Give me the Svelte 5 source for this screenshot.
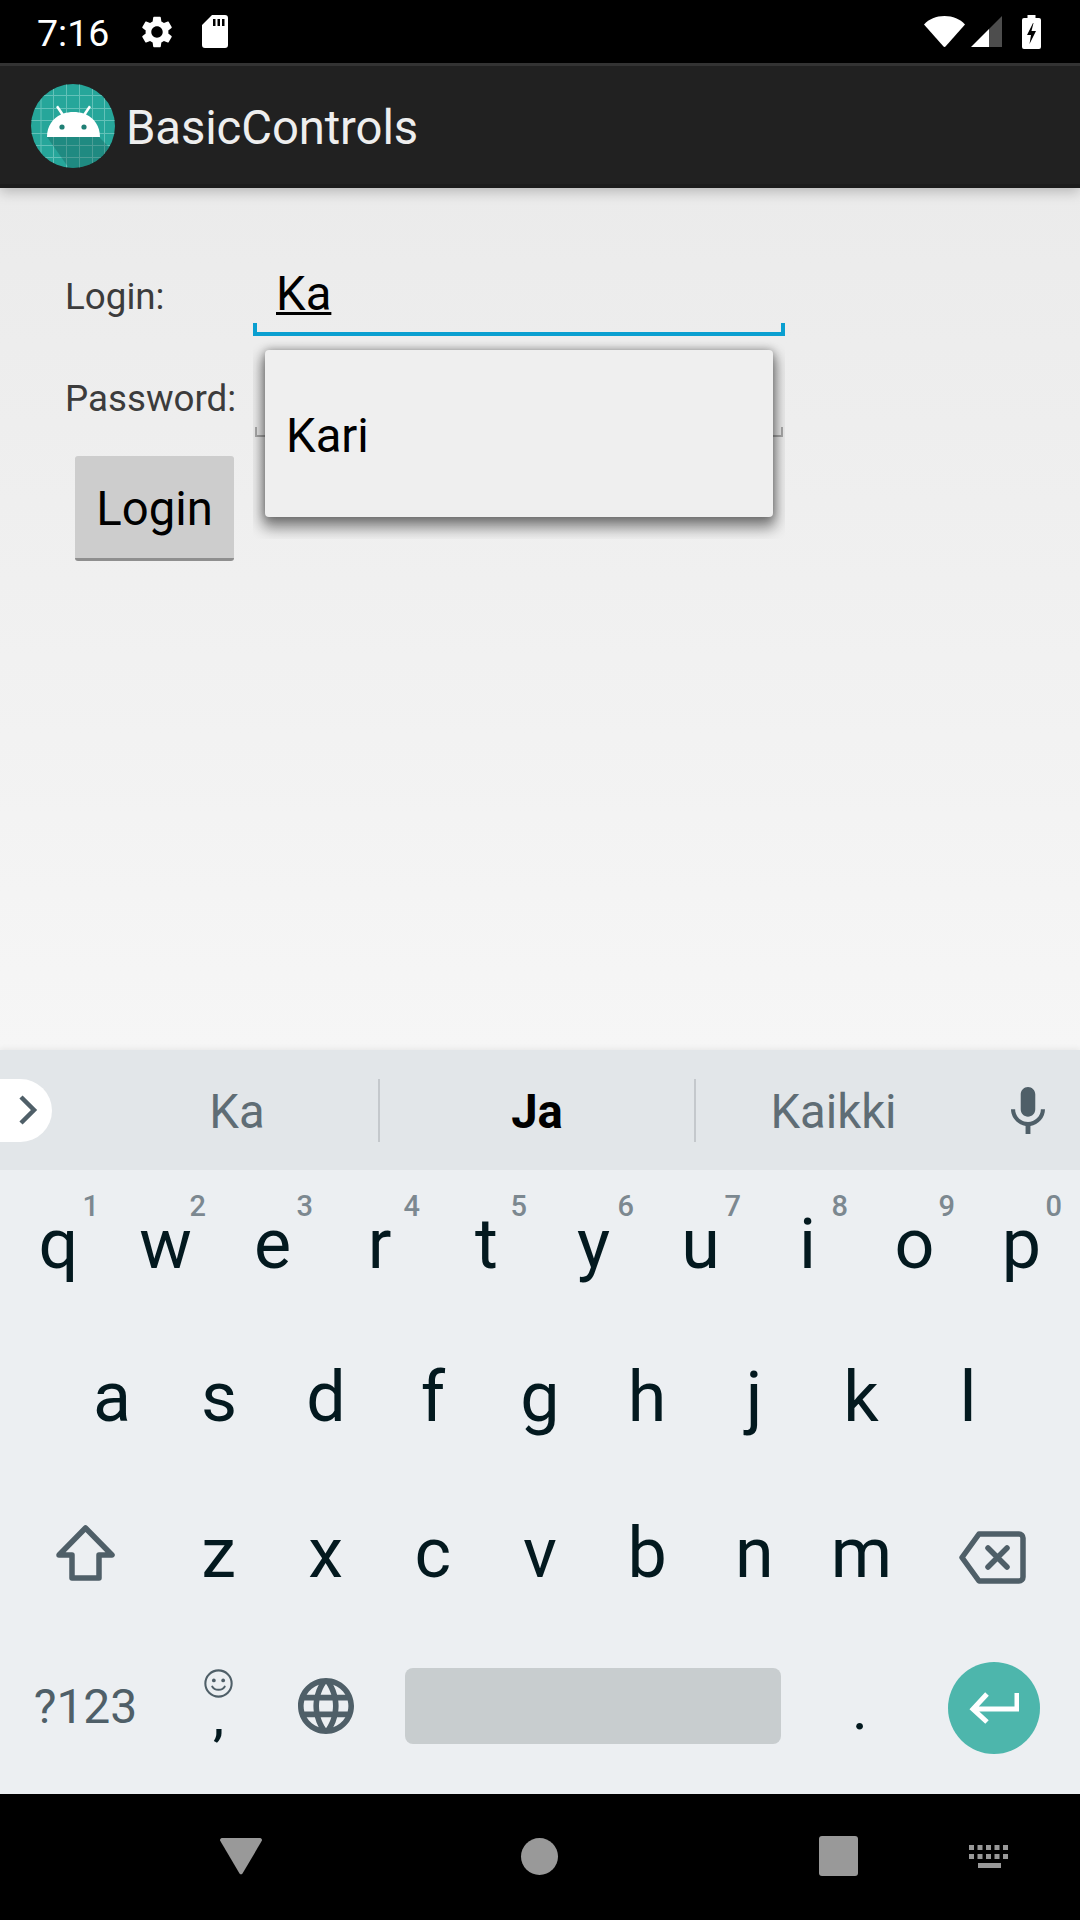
<script>
  const rowOne = [['q','1'],['w','2'],['e','3'],['r','4'],['t','5'],['y','6'],['u','7'],['i','8'],['o','9'],['p','0']];
  const rowTwo = ['a','s','d','f','g','h','j','k','l'];
  const rowThree = ['z','x','c','v','b','n','m'];
  const gridX = [9.500, 22, 35, 48, 61, 73];
  const gridY = [11, 24, 36, 49, 61, 73];
</script>

<div class="screen">
  <div class="statusbar">
    <span class="time">7:16</span>
    <svg class="gear" viewBox="0 0 24 24"><path fill="#fff" d="M19.14 12.94c.04-.3.06-.61.06-.94 0-.32-.02-.64-.07-.94l2.03-1.58c.18-.14.23-.41.12-.61l-1.92-3.32c-.12-.22-.37-.29-.59-.22l-2.39.96c-.5-.38-1.03-.7-1.62-.94l-.36-2.54c-.04-.24-.24-.41-.48-.41h-3.84c-.24 0-.43.17-.47.41l-.36 2.54c-.59.24-1.13.57-1.62.94l-2.39-.96c-.22-.08-.47 0-.59.22L2.74 8.87c-.12.21-.08.47.12.61l2.03 1.58c-.05.3-.09.63-.09.94s.02.64.07.94l-2.03 1.58c-.18.14-.23.41-.12.61l1.92 3.32c.12.22.37.29.59.22l2.39-.96c.5.38 1.03.7 1.62.94l.36 2.54c.05.24.24.41.48.41h3.84c.24 0 .44-.17.47-.41l.36-2.54c.59-.24 1.13-.56 1.62-.94l2.39.96c.22.08.47 0 .59-.22l1.92-3.32c.12-.22.07-.47-.12-.61l-2.01-1.58zM12 15.6c-1.98 0-3.6-1.62-3.6-3.6s1.62-3.6 3.6-3.6 3.6 1.62 3.6 3.6-1.62 3.6-3.6 3.6z"/></svg>
    <svg class="sd" viewBox="0 0 26 33"><path fill="#fff" fill-rule="evenodd" d="M10 0h13a3 3 0 0 1 3 3v27a3 3 0 0 1-3 3H3a3 3 0 0 1-3-3V10zM11 4v7h2.500V4zM15.500 4v7H18V4zM20 4v7h2.500V4z"/></svg>
    <span class="spacer"></span>
    <svg class="wifi" viewBox="0 0 41 31"><path fill="#fff" d="M0 8.500C5 3 12 0 20.500 0S36 3 41 8.500L21.500 30.500a1.400 1.400 0 0 1-2 0z"/></svg>
    <svg class="signal" viewBox="0 0 31 31"><path fill="#fff" fill-opacity=".3" d="M18 13L31 0v31H18z"/><path fill="#fff" d="M0 31L18 13v18z"/></svg>
    <svg class="battery" viewBox="0 0 19 34"><path fill="#fff" fill-rule="evenodd" d="M5.500 0h8v3H17a2 2 0 0 1 2 2v27a2 2 0 0 1-2 2H2a2 2 0 0 1-2-2V5a2 2 0 0 1 2-2h3.500zM11 8l-6 12h4l-1.500 9 6.500-13h-4.500l2-8z"/></svg>
  </div>

  <header class="appbar">
    <svg class="logo" viewBox="0 0 84 84">
      <defs><clipPath id="disc"><circle cx="42" cy="42" r="42"/></clipPath></defs>
      <g clip-path="url(#disc)">
        <rect width="84" height="84" fill="#26a69a"/>
        {#each gridX as x}
          <rect {x} y="0" width="1" height="84" fill="#63c1b8"/>
        {/each}
        {#each gridY as y}
          <rect x="0" {y} width="84" height="1" fill="#63c1b8"/>
        {/each}
        <path fill="#10443f" fill-opacity=".28" d="M16 53h52l24 24v20H47z"/>
        <path fill="#fff" d="M16 53c0-11 6-19 14-22.500l-5-7.500 2-1.500 5.500 8c6-2 14-2 20 0l5.500-8 2 1.500-5 7.500C63 34 69 42 69 53z"/>
        <circle cx="31" cy="43" r="2.600" fill="#1f7f75"/>
        <circle cx="53" cy="43" r="2.600" fill="#1f7f75"/>
      </g>
    </svg>
    <span class="title">BasicControls</span>
  </header>

  <main class="page">
    <div class="field-row">
      <span class="label">Login:</span>
      <div class="input active"><span class="typed">Ka</span></div>
    </div>
    <div class="field-row second">
      <span class="label">Password:</span>
      <div class="input"></div>
    </div>
    <button class="login">Login</button>

    <div class="popup"><span>Kari</span></div>
  </main>

  <section class="keyboard">
    <div class="strip">
      <div class="chip">
        <svg viewBox="0 0 20 30"><path fill="none" stroke="#4f5f68" stroke-width="4.500" d="M3 2l13 13L3 28"/></svg>
      </div>
      <span class="word first">Ka</span>
      <i class="divider"></i>
      <span class="word strong">Ja</span>
      <i class="divider"></i>
      <span class="word last">Kaikki</span>
      <svg class="mic" viewBox="5 2 14 19" preserveAspectRatio="none"><path fill="#4f5f68" d="M12 14c1.660 0 2.990-1.340 2.990-3L15 5c0-1.660-1.340-3-3-3S9 3.340 9 5v6c0 1.660 1.340 3 3 3zm5.300-3c0 3-2.540 5.100-5.300 5.100S6.700 14 6.700 11H5c0 3.410 2.720 6.230 6 6.720V21h2v-3.280c3.280-.48 6-3.300 6-6.720h-1.700z"/></svg>
    </div>

    <div class="keys">
      <div class="row top">
        {#each rowOne as [letter, hint]}
          <div class="key">{letter}<sup class="hint">{hint}</sup></div>
        {/each}
      </div>
      <div class="row indent">
        {#each rowTwo as letter}
          <div class="key">{letter}</div>
        {/each}
      </div>
      <div class="row third">
        <div class="key wide">
          <svg class="shift" viewBox="0 0 59 56"><path fill="none" stroke="#4f5f68" stroke-width="5.500" stroke-linejoin="round" d="M29.500 3L56 30H43v23H16V30H3z"/></svg>
        </div>
        {#each rowThree as letter}
          <div class="key">{letter}</div>
        {/each}
        <div class="key wide">
          <svg class="backspace" viewBox="0 0 67 53"><path fill="none" stroke="#4f5f68" stroke-width="5.500" stroke-linejoin="round" d="M20 3H60a4 4 0 0 1 4 4V46a4 4 0 0 1-4 4H20L3 26.500z"/><path fill="none" stroke="#4f5f68" stroke-width="5.500" stroke-linecap="round" d="M29 17l19 19M48 17L29 36"/></svg>
        </div>
      </div>
      <div class="row">
        <div class="key wide sym">?123</div>
        <div class="key comma">
          <svg class="smiley" viewBox="0 0 28 28"><circle cx="14" cy="14" r="12.700" fill="none" stroke="#4f5f68" stroke-width="2"/><circle cx="9.500" cy="11" r="1.800" fill="#4f5f68"/><circle cx="18.500" cy="11" r="1.800" fill="#4f5f68"/><path d="M8 17c2 4 10 4 12 0" fill="none" stroke="#4f5f68" stroke-width="2" stroke-linecap="round"/></svg>
          <span>,</span>
        </div>
        <div class="key globe-key">
          <svg class="globe" viewBox="2 2 20 20"><path fill="#4f5f68" d="M11.990 2C6.470 2 2 6.480 2 12s4.470 10 9.990 10C17.520 22 22 17.520 22 12S17.520 2 11.990 2zm6.930 6h-2.950c-.32-1.250-.78-2.450-1.380-3.560 1.840.63 3.370 1.910 4.330 3.560zM12 4.040c.83 1.200 1.480 2.530 1.910 3.960h-3.820c.43-1.430 1.080-2.760 1.910-3.960zM4.260 14C4.100 13.360 4 12.690 4 12s.1-1.360.26-2h3.380c-.08.66-.14 1.320-.14 2 0 .68.06 1.340.14 2H4.260zm.82 2h2.950c.32 1.250.78 2.450 1.380 3.560-1.840-.63-3.370-1.900-4.330-3.560zm2.950-8H5.080c.96-1.660 2.490-2.930 4.330-3.560C8.810 5.550 8.350 6.750 8.030 8zM12 19.960c-.83-1.200-1.480-2.530-1.910-3.960h3.820c-.43 1.430-1.080 2.760-1.910 3.960zM14.340 14H9.660c-.09-.66-.16-1.320-.16-2 0-.68.07-1.350.16-2h4.680c.09.65.16 1.320.16 2 0 .68-.07 1.340-.16 2zm.25 5.560c.6-1.110 1.060-2.310 1.380-3.560h2.950c-.96 1.650-2.490 2.930-4.330 3.560zM16.360 14c.08-.66.14-1.320.14-2 0-.68-.06-1.340-.14-2h3.380c.16.64.26 1.310.26 2s-.1 1.360-.26 2h-3.380z"/></svg>
        </div>
        <div class="space-key"><div class="space"></div></div>
        <div class="key period"><span>.</span></div>
        <div class="key wide">
          <div class="enter">
            <svg viewBox="0 0 50 32"><path fill="none" stroke="#fff" stroke-width="5" d="M48 1v16H5M18 2L4 17l14 13"/></svg>
          </div>
        </div>
      </div>
    </div>
  </section>

  <nav class="navbar">
    <svg class="back" viewBox="0 0 42 37"><path fill="#999" d="M2 0h38a2 2 0 0 1 1.800 2.800L22.500 35.500a2 2 0 0 1-3 0L.2 2.800A2 2 0 0 1 2 0z"/></svg>
    <div class="home"></div>
    <div class="recent"></div>
    <svg class="kbd" viewBox="0 0 41 23">
      {#each [0, 8.500, 17, 25.500, 34] as x}
        <rect {x} y="0" width="5" height="5" fill="#999"/>
        <rect {x} y="9" width="5" height="5" fill="#999"/>
      {/each}
      <rect x="9" y="18" width="23" height="5" fill="#999"/>
    </svg>
  </nav>
</div>

<style>
  :global(body) {
    margin: 0;
    background: #000;
  }

  .screen {
    width: 1080px;
    height: 1920px;
    display: flex;
    flex-direction: column;
    overflow: hidden;
    font-family: Roboto, "Liberation Sans", sans-serif;
  }

  .statusbar {
    height: 63px;
    background: #000;
    display: flex;
    align-items: center;
    padding: 0 39px 0 37px;
    color: #fff;
    flex: none;
  }

  .time {
    font-size: 37.500px;
    width: 100px;
    margin-top: 2px;
  }

  .gear { width: 38px; height: 38px; margin-left: 1px; }
  .sd { width: 26px; height: 33px; margin-left: 26px; }
  .spacer { flex: 1; }
  .wifi { width: 41px; height: 31px; }
  .signal { width: 31px; height: 31px; margin-left: 6px; }
  .battery { width: 19px; height: 34px; margin-left: 20px; }

  .appbar {
    height: 125px;
    flex: none;
    box-sizing: border-box;
    background: #212121;
    border-top: 3px solid #333;
    border-bottom: 4px solid #1c1c1c;
    display: flex;
    align-items: center;
    padding-left: 31px;
    box-shadow: 0 4px 12px rgba(0, 0, 0, .22);
    z-index: 2;
    position: relative;
  }

  .logo { width: 84px; height: 84px; margin-top: 2px; }

  .title {
    color: #eee;
    font-size: 47.250px;
    letter-spacing: -.1px;
    margin-left: 11px;
    margin-top: 6px;
  }

  .page {
    flex: 1;
    position: relative;
    background: linear-gradient(#ebebeb, #f6f6f6);
    padding: 67px 0 0 65px;
  }

  .field-row {
    display: flex;
    height: 81px;
    align-items: flex-end;
  }

  .second { height: 101px; }

  .label {
    width: 188px;
    font-size: 36.750px;
    color: #3c3c3c;
    padding-bottom: 18px;
  }

  .second .label { padding-bottom: 17px; }

  .input {
    width: 528px;
    margin-left: 2px;
    height: 10px;
    box-sizing: border-box;
    border: 2px solid #aaa;
    border-top: 0;
    position: relative;
  }

  .active {
    width: 532px;
    margin-left: 0;
    border: 4px solid #0a9fd0;
    border-top: 0;
    height: 13px;
  }

  .typed {
    position: absolute;
    left: 19px;
    bottom: 10px;
    font-size: 47.250px;
    color: #000;
    text-decoration: underline;
    text-decoration-thickness: 3px;
  }

  .login {
    display: block;
    width: 159px;
    height: 105px;
    margin: 19px 0 0 10px;
    padding: 4px 0 0;
    border: 0;
    border-bottom: 3px solid #8f8f8f;
    border-radius: 3px;
    background: #cdcdcd;
    font: 47.250px Roboto, sans-serif;
    color: #000;
  }

  .popup {
    position: absolute;
    left: 265px;
    top: 162px;
    width: 508px;
    height: 167px;
    box-sizing: border-box;
    background: #efefef;
    border-radius: 4px;
    padding: 5px 0 0 21px;
    display: flex;
    align-items: center;
    font-size: 47.250px;
    color: #000;
    box-shadow: 0 0 9px rgba(0, 0, 0, .3), 0 8px 14px 3px rgba(0, 0, 0, .45);
    clip-path: inset(-12px -12px -22px -12px);
  }

  .keyboard {
    flex: none;
    height: 744px;
    background: #eceff2;
    display: flex;
    flex-direction: column;
    box-shadow: 0 -2px 5px rgba(0, 0, 0, .05);
    z-index: 1;
  }

  .strip {
    height: 120px;
    background: #e2e6e9;
    display: flex;
    align-items: center;
    position: relative;
  }

  .chip {
    width: 52px;
    height: 63px;
    background: #fff;
    border-radius: 0 32px 32px 0;
    display: flex;
    align-items: center;
    padding-left: 18px;
    box-sizing: border-box;
  }

  .chip svg { width: 20px; height: 30px; }

  .word {
    font-size: 47.250px;
    color: #5f6d75;
    text-align: center;
    margin-top: 3px;
  }

  .first { width: 275px; margin-left: 51px; padding-right: 7px; box-sizing: border-box; }
  .strong { font-weight: 700; color: #000; width: 314px; }
  .last { width: 275px; }

  .divider {
    width: 2px;
    height: 63px;
    background: #c4c8cc;
  }

  .mic {
    position: absolute;
    left: 1011px;
    top: 37px;
    width: 34px;
    height: 47px;
  }

  .keys {
    flex: 1;
    display: flex;
    flex-direction: column;
    padding-bottom: 4px;
  }

  .row {
    height: 155px;
    display: flex;
  }

  .top { height: 153px; padding: 0 5px; }
  .top .key { padding-bottom: 6px; }
  .third { height: 157px; }
  .indent { padding: 0 58.500px; }

  .key {
    flex: 1;
    position: relative;
    display: flex;
    align-items: center;
    justify-content: center;
    font-size: 70px;
    color: #03191f;
    padding-bottom: 8px;
    box-sizing: border-box;
  }

  .wide { flex: none; width: 165px; }

  .hint {
    position: absolute;
    right: 13px;
    top: 22px;
    font-size: 29px;
    font-weight: 500;
    line-height: 1;
    color: #7c8890;
  }

  .shift { width: 59px; height: 56px; margin-left: 5px; }
  .backspace { width: 67px; height: 53px; margin-right: 9px; margin-top: 10px; }

  .sym {
    font-size: 48px;
    color: #4f5f68;
    padding: 0 0 13px 6px;
  }

  .comma {
    flex: none;
    width: 107px;
    flex-direction: column;
    justify-content: flex-start;
    font-size: 50px;
    font-weight: 500;
    padding: 34px 0 0;
    line-height: 1;
  }

  .smiley { width: 29px; height: 29px; }
  .comma span { margin-top: -5px; }

  .globe-key { flex: none; width: 108px; }
  .globe { width: 56px; height: 56px; margin-top: -6px; }

  .space-key {
    width: 426px;
    padding: 33px 25px 0;
    box-sizing: border-box;
  }

  .space {
    height: 76px;
    background: #c8cdcf;
    border-radius: 8px;
  }

  .period {
    flex: none;
    width: 108px;
    font-size: 60px;
  }

  .enter {
    width: 92px;
    height: 92px;
    border-radius: 50%;
    background: #4db6ac;
    display: flex;
    align-items: center;
    justify-content: center;
    margin: -2px 6px 0 0;
  }

  .enter svg { width: 50px; height: 32px; }

  .navbar {
    flex: none;
    height: 126px;
    background: #000;
    position: relative;
    display: flex;
    align-items: center;
  }

  .back { width: 42px; height: 37px; margin-left: 220px; margin-top: -1px; }
  .home {
    width: 37px;
    height: 37px;
    border-radius: 50%;
    background: #999;
    margin-left: 259px;
    margin-top: -2px;
  }
  .recent {
    width: 39px;
    height: 40px;
    border-radius: 3px;
    background: #999;
    margin-left: 261px;
    margin-top: -2px;
  }
  .kbd { width: 41px; height: 23px; margin-left: 111px; margin-top: -2px; }
</style>
